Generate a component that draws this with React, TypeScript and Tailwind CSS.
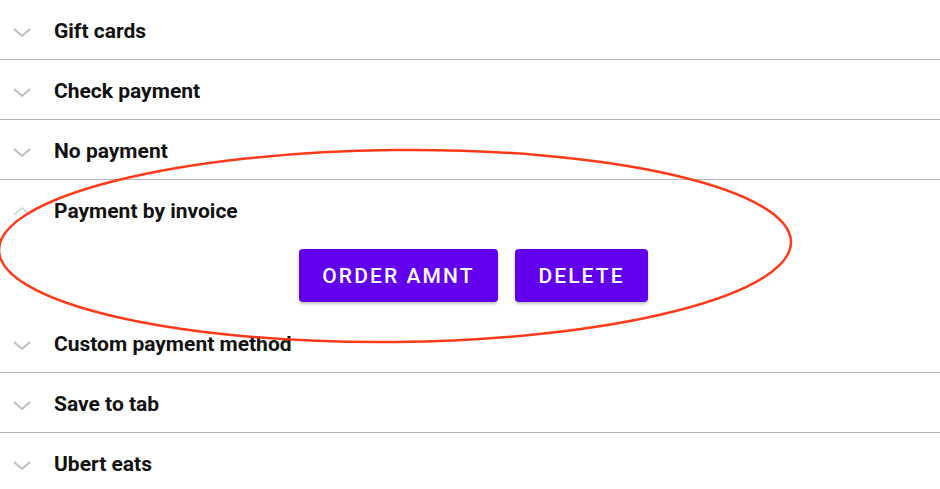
import React from 'react';

type Method = { label: string; open?: boolean };

const methods: Method[] = [
  { label: 'Gift cards' },
  { label: 'Check payment' },
  { label: 'No payment' },
  { label: 'Payment by invoice', open: true },
  { label: 'Custom payment method' },
  { label: 'Save to tab' },
  { label: 'Ubert eats' },
];

const Chevron = ({ up }: { up?: boolean }) => (
  <svg width="20" height="12" viewBox="0 0 20 12" className="shrink-0">
    {up ? (
      <path d="M2 9 L10 2 L18 9" fill="none" stroke="#c9d3d6" strokeWidth="1.6" />
    ) : (
      <path d="M2 3 L10 10 L18 3" fill="none" stroke="#bdbdbd" strokeWidth="2" />
    )}
  </svg>
);

const Header = ({ label, up }: { label: string; up?: boolean }) => (
  <div className="h-[59px] flex items-center gap-[22px] pl-[12px] pt-[4px]">
    <Chevron up={up} />
    <span className="text-[21px] font-bold text-[#111]">{label}</span>
  </div>
);

const App: React.FC = () => {
  return (
    <div className="relative w-[940px] h-[489px] overflow-hidden bg-white font-['Roboto',sans-serif]">
      {methods.map((m) =>
        m.open ? (
          <div key={m.label}>
            <div className="h-[60px]">
              <Header label={m.label} up />
            </div>
            <div className="flex justify-center gap-[17px] pl-[7px] pt-[9px] pb-[11px]">
              <button className="w-[199px] h-[53px] pt-[3px] rounded-[4px] bg-[#6200ee] text-white text-[21px] font-medium tracking-[0.1em] shadow-[0_2px_3px_rgba(0,0,0,0.25)]">
                ORDER AMNT
              </button>
              <button className="w-[133px] h-[53px] pt-[3px] rounded-[4px] bg-[#6200ee] text-white text-[21px] font-medium tracking-[0.1em] shadow-[0_2px_3px_rgba(0,0,0,0.25)]">
                DELETE
              </button>
            </div>
          </div>
        ) : (
          <div key={m.label} className="border-b border-[#b3b3b3]">
            <Header label={m.label} />
          </div>
        )
      )}
      <svg className="absolute left-0 top-0 pointer-events-none" width="940" height="489">
        <ellipse
          cx="395"
          cy="246"
          rx="396"
          ry="96"
          fill="none"
          stroke="#ff3a1a"
          strokeWidth="2.5"
          transform="rotate(-0.6 395 246)"
        />
      </svg>
    </div>
  );
};

export default App;
